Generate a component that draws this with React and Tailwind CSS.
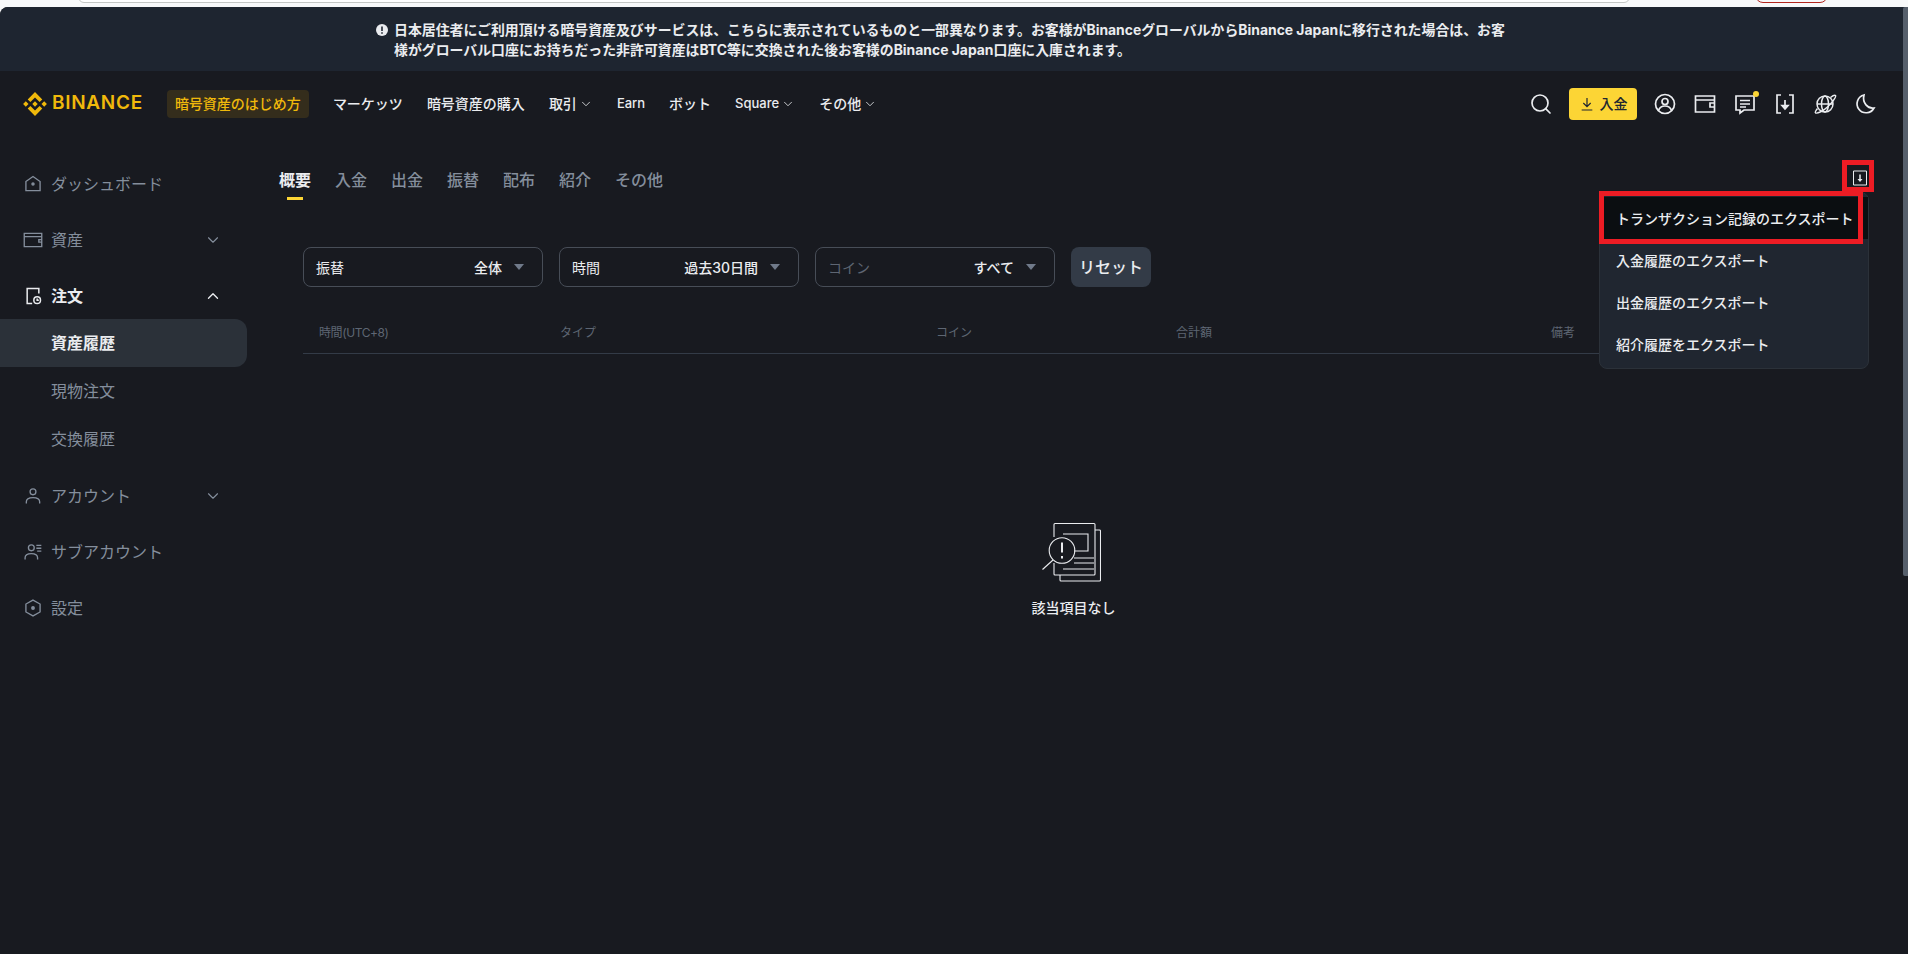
import React from 'react';
import { ChevronDown, ChevronUp, Search } from 'lucide-react';

const jp = "font-['Inter','Noto_Sans_CJK_JP',sans-serif]";

const Logo = () => (
  <svg viewBox="0 0 24 24" className="w-[24px] h-[24px] fill-[#f0b90b]">
    <path d="M7.4 10.1 12 5.5l4.6 4.6 2.7-2.7L12 .1 4.7 7.4zM.1 12l2.7-2.7L5.5 12l-2.7 2.7zM7.4 13.9 12 18.5l4.6-4.6 2.7 2.7L12 23.9l-7.3-7.3zM18.5 12l2.7-2.7 2.7 2.7-2.7 2.7zM14.7 12 12 9.3 10 11.3l-.2.2-.5.5 2.7 2.7z" />
  </svg>
);

const Icon = ({ className = 'w-[20px] h-[20px]', children, stroke = 1.6 }) => (
  <svg viewBox="0 0 24 24" fill="none" stroke="currentColor" strokeWidth={stroke} className={className}>
    {children}
  </svg>
);

const navItems = [
  { label: 'マーケッツ' },
  { label: '暗号資産の購入' },
  { label: '取引', chevron: true },
  { label: 'Earn', small: true },
  { label: 'ボット' },
  { label: 'Square', chevron: true, small: true },
  { label: 'その他', chevron: true },
];

const Navbar = () => (
  <header className="h-[67px] pb-[2px] bg-[#181a20] flex items-center pl-[23px] pr-[31px]">
    <Logo />
    <span className="ml-[5px] text-[19px] font-semibold tracking-[0.7px] text-[#f0b90b] font-['Inter',sans-serif]">BINANCE</span>
    <a className="ml-[24px] h-[28px] px-[8px] rounded-[4px] bg-[#342d1c] text-[#f0b90b] text-[14px] font-medium flex items-center">暗号資産のはじめ方</a>
    <nav className="ml-[24px] flex items-center gap-[24px] text-[14px] font-medium text-[#eaecef]">
      {navItems.map((item) => (
        <span key={item.label} className={`flex items-center gap-[2px] ${item.small ? 'text-[13px]' : ''}`}>
          {item.label}
          {item.chevron && <ChevronDown size={14} strokeWidth={1.4} />}
        </span>
      ))}
    </nav>
    <div className="ml-auto flex items-center text-[#eaecef]">
      <Search size={24} strokeWidth={1.7} />
      <button className="ml-[16px] w-[68px] h-[32px] rounded-[4px] bg-[#fcd535] text-[#202630] text-[14px] font-medium flex items-center justify-center gap-[5px]">
        <Icon className="w-[16px] h-[16px]" stroke={1.8}>
          <path d="M12 3v13M6.500 10.500 12 16l5.500-5.500M4 21h16" />
        </Icon>
        入金
      </button>
      <div className="ml-[16px] flex items-center gap-[16px]">
        <Icon className="w-[24px] h-[24px]" stroke={1.7}>
          <circle cx="12" cy="12" r="9.500" />
          <circle cx="12" cy="9.500" r="3" />
          <path d="M5.500 18.500c1-3 3.500-4.500 6.500-4.500s5.500 1.500 6.500 4.500" />
        </Icon>
        <Icon className="w-[24px] h-[24px]" stroke={1.7}>
          <path d="M2.500 4h19v16h-19zM2.500 8h19M21.500 11H17v4h4.500" />
        </Icon>
        <div className="relative w-[24px] h-[24px]">
          <Icon className="w-[24px] h-[24px]" stroke={1.7}>
            <path d="M3 4h18v14h-10l-4 3v-3H3zM7 8.500h10M7 12h10M7 15h6" />
          </Icon>
          <span className="absolute right-[-2px] top-[-1px] w-[6px] h-[6px] rounded-full bg-[#fcd535]" />
        </div>
        <Icon className="w-[24px] h-[24px]" stroke={1.7}>
          <path d="M8 3H4v18h4M16 3h4v18h-4" />
          <path d="M12 8v8" />
          <path d="M9 13.500 12 17l3-3.500z" fill="currentColor" />
        </Icon>
        <Icon className="w-[24px] h-[24px]" stroke={1.5}>
          <circle cx="12" cy="12" r="8" />
          <ellipse cx="12" cy="12" rx="3.500" ry="8" />
          <path d="M4 12h16" />
          <path d="M17.500 5.500C20 3.500 22 3 22.500 3.500c1 1-3 7-8 11.500S4 22 2.500 20.800c-.5-.5 0-2 2-4.300" />
        </Icon>
        <Icon className="w-[24px] h-[24px]" stroke={1.7}>
          <path d="M11 3a9 9 0 1 0 10 13c-6 1-12-5-10-13z" />
        </Icon>
      </div>
    </div>
  </header>
);

const SideIcon = ({ name }) => {
  if (name === 'home') return <Icon><path d="m3.500 9 8.500-6 8.500 6v11h-17z" /><circle cx="12" cy="12" r="1.300" fill="currentColor" /></Icon>;
  if (name === 'wallet') return <Icon><path d="M1.500 4h21v16h-21zM1.500 8h21M22.500 11.500H19v3h3.500" /></Icon>;
  if (name === 'order') return <Icon stroke={1.8}><path d="M19 9V3H5v18h6" /><circle cx="17" cy="17" r="4" /><path d="M17 15v2h2" /></Icon>;
  if (name === 'user') return <Icon><circle cx="12" cy="7" r="3.500" /><path d="M4 21v-2c0-3 3-5 8-5s8 2 8 5v2" /></Icon>;
  if (name === 'sub') return <Icon><circle cx="10" cy="7" r="3.500" /><path d="M2.500 21v-2c0-3 3-5 7.500-5s7.500 2 7.500 5v2M16 4h6M16 7.500h6M17 11h5" /></Icon>;
  return <Icon><path d="m12 2.500 8.500 4.750v9.500L12 21.500l-8.500-4.750v-9.500z" /><circle cx="12" cy="12" r="1.500" fill="currentColor" /></Icon>;
};

const SideRow = ({ icon, label, chevron, active }) => (
  <div className={`h-[56px] pl-[23px] pr-[25px] flex items-center ${active ? 'text-[#eaecef] font-semibold' : ''}`}>
    <SideIcon name={icon} />
    <span className="ml-[8px]">{label}</span>
    {chevron === 'down' && <ChevronDown size={18} strokeWidth={1.5} className="ml-auto" />}
    {chevron === 'up' && <ChevronUp size={18} strokeWidth={1.8} className="ml-auto" />}
  </div>
);

const Sidebar = () => (
  <aside className="w-[247px] pt-[18px] text-[16px] text-[#848e9c] shrink-0">
    <SideRow icon="home" label="ダッシュボード" />
    <SideRow icon="wallet" label="資産" chevron="down" />
    <SideRow icon="order" label="注文" chevron="up" active />
    <div className="-mt-[5px] mb-[5px]">
      <a className="h-[48px] pl-[51px] rounded-r-[12px] bg-[#2b3139] text-[#eaecef] font-semibold flex items-center">資産履歴</a>
      <a className="h-[48px] pl-[51px] flex items-center">現物注文</a>
      <a className="h-[48px] pl-[51px] flex items-center">交換履歴</a>
    </div>
    <SideRow icon="user" label="アカウント" chevron="down" />
    <SideRow icon="sub" label="サブアカウント" />
    <SideRow icon="settings" label="設定" />
  </aside>
);

const tabs = ['概要', '入金', '出金', '振替', '配布', '紹介', 'その他'];

const FilterSelect = ({ label, value, muted }) => (
  <div className="w-[240px] h-[40px] px-[12px] border border-[#474d57] rounded-[8px] flex items-center text-[14px]">
    <span className={muted ? 'text-[#5e6673]' : 'text-[#eaecef]'}>{label}</span>
    <span className="ml-auto font-medium text-[#eaecef]">{value}</span>
    <span className="ml-[12px] mr-[6px] w-0 h-0 border-x-[5px] border-x-transparent border-t-[6px] border-t-[#707a8a]" />
  </div>
);

const columns = [
  { label: '時間(UTC+8)', className: 'w-[241px] tracking-[-0.4px]' },
  { label: 'タイプ', className: 'w-[376px]' },
  { label: 'コイン', className: 'w-[240px]' },
  { label: '合計額', className: 'w-[375px]' },
  { label: '備考', className: '' },
];

const EmptyIcon = () => (
  <svg viewBox="0 0 60 60" fill="none" stroke="#eaecef" strokeWidth="1.1" className="w-[60px] h-[60px] -translate-x-[3px]">
    <path d="M13 15V2.500c0-.6.400-1 1-1h39c.6 0 1 .400 1 1V52c0 .6-.400 1-1 1H14c-.6 0-1-.400-1-1V41" />
    <path d="M54 8h4.500c.6 0 1 .400 1 1v49c0 .6-.400 1-1 1H20c-.6 0-1-.400-1-1v-5" />
    <path d="M22 12h25v17H33" />
    <path d="M33 36h20M33 41h20M22 47h31" />
    <circle cx="21" cy="28.500" r="12.800" />
    <path d="M12 38 1.500 47.500" />
    <path d="M21 20.500v10" strokeWidth="2" />
    <path d="M21 34v2.500" strokeWidth="2" />
  </svg>
);

const menu = ['トランザクション記録のエクスポート', '入金履歴のエクスポート', '出金履歴のエクスポート', '紹介履歴をエクスポート'];

const ExportMenu = () => (
  <div className="absolute left-[1599px] top-[54px] w-[270px] pt-[4px] pb-[3px] rounded-[8px] bg-[#202630] border border-[#2b3139] text-[14px] font-medium text-[#eaecef]">
    {menu.map((item, i) => (
      <div key={item} className={`h-[42px] pl-[16px] flex items-center ${i === 0 ? 'bg-[#0b0e11]' : ''}`}>{item}</div>
    ))}
  </div>
);

const Main = () => (
  <main className="flex-1 pl-[32px] pr-[40px] pt-[30px] min-w-0">
    <div className="flex items-start gap-[24px] text-[16px] text-[#848e9c]">
      {tabs.map((tab, i) => (
        <div key={tab} className="flex flex-col items-center">
          <span className={`leading-[24px] ${i === 0 ? 'text-[#eaecef] font-semibold' : 'font-medium'}`}>{tab}</span>
          {i === 0 && <span className="mt-[5px] w-[16px] h-[3px] bg-[#fcd535]" />}
        </div>
      ))}
    </div>
    <div className="ml-[24px] mt-[47px] flex gap-[16px]">
      <FilterSelect label="振替" value="全体" />
      <FilterSelect label="時間" value="過去30日間" />
      <FilterSelect label="コイン" value="すべて" muted />
      <button className="w-[80px] h-[40px] rounded-[8px] bg-[#333b47] text-[16px] font-medium text-[#eaecef]">リセット</button>
    </div>
    <div className="ml-[24px] mt-[36px] h-[31px] pb-[11px] pl-[16px] flex items-center border-b border-[#333b47] text-[12px] text-[#5e6673]">
      {columns.map((col) => (
        <span key={col.label} className={col.className}>{col.label}</span>
      ))}
    </div>
    <div className="mt-[168px] flex flex-col items-center">
      <EmptyIcon />
      <span className="mt-[15px] text-[14px] font-medium text-[#eaecef]">該当項目なし</span>
    </div>
  </main>
);

export default function App() {
  return (
    <div className={`h-[954px] overflow-hidden bg-[#f8f9fa] relative ${jp}`}>
      <div className="h-[7px] relative overflow-hidden">
        <div className="absolute left-[78px] top-[-10px] w-[1552px] h-[13px] bg-white rounded-b-[6px] border border-[#c4c7c5]" />
        <div className="absolute left-[1755px] top-[-10px] w-[73px] h-[13px] rounded-b-[8px] border border-[#b3261e]" />
      </div>
      <div className="relative h-[947px] rounded-tl-[8px] overflow-hidden bg-[#181a20]">
        <div className="h-[64px] bg-[#1e2530] pl-[376px] pt-[13px]">
          <div className="flex text-[13.9px] leading-[20px] font-bold text-[#eaecef]">
            <svg viewBox="0 0 12 12" className="w-[12px] h-[12px] mt-[4px] shrink-0 mr-[6px]">
              <circle cx="6" cy="6" r="6" fill="#eaecef" />
              <path d="M6 2.500v4.500M6 8.300v1.500" stroke="#1e2530" strokeWidth="1.600" />
            </svg>
            <p>
              日本居住者にご利用頂ける暗号資産及びサービスは、こちらに表示されているものと一部異なります。お客様がBinanceグローバルからBinance Japanに移行された場合は、お客
              <br />
              様がグローバル口座にお持ちだった非許可資産はBTC等に交換された後お客様のBinance Japan口座に入庫されます。
            </p>
          </div>
        </div>
        <Navbar />
        <div className="relative flex">
          <Sidebar />
          <Main />
          <svg viewBox="0 0 16 16" fill="none" className="absolute left-[1852px] top-[32px] w-[16px] h-[16px] text-[#eaecef]">
            <path d="M1.500 1h13v14h-13z" stroke="currentColor" strokeWidth="1" />
            <path d="M8 4.500v6" stroke="currentColor" strokeWidth="1.500" />
            <path d="M5.500 9 8 12l2.500-3z" fill="currentColor" />
          </svg>
          <ExportMenu />
          <div className="absolute left-[1842px] top-[22px] w-[32px] h-[32px] border-[5px] border-[#ed1c24]" />
          <div className="absolute left-[1599px] top-[53px] w-[264px] h-[53px] border-[5px] border-[#ed1c24]" />
        </div>
        <div className="absolute right-0 top-0 w-[5px] h-[569px] bg-[#565f6b] rounded-tl-[2px] rounded-bl-[2px]" />
      </div>
    </div>
  );
}
